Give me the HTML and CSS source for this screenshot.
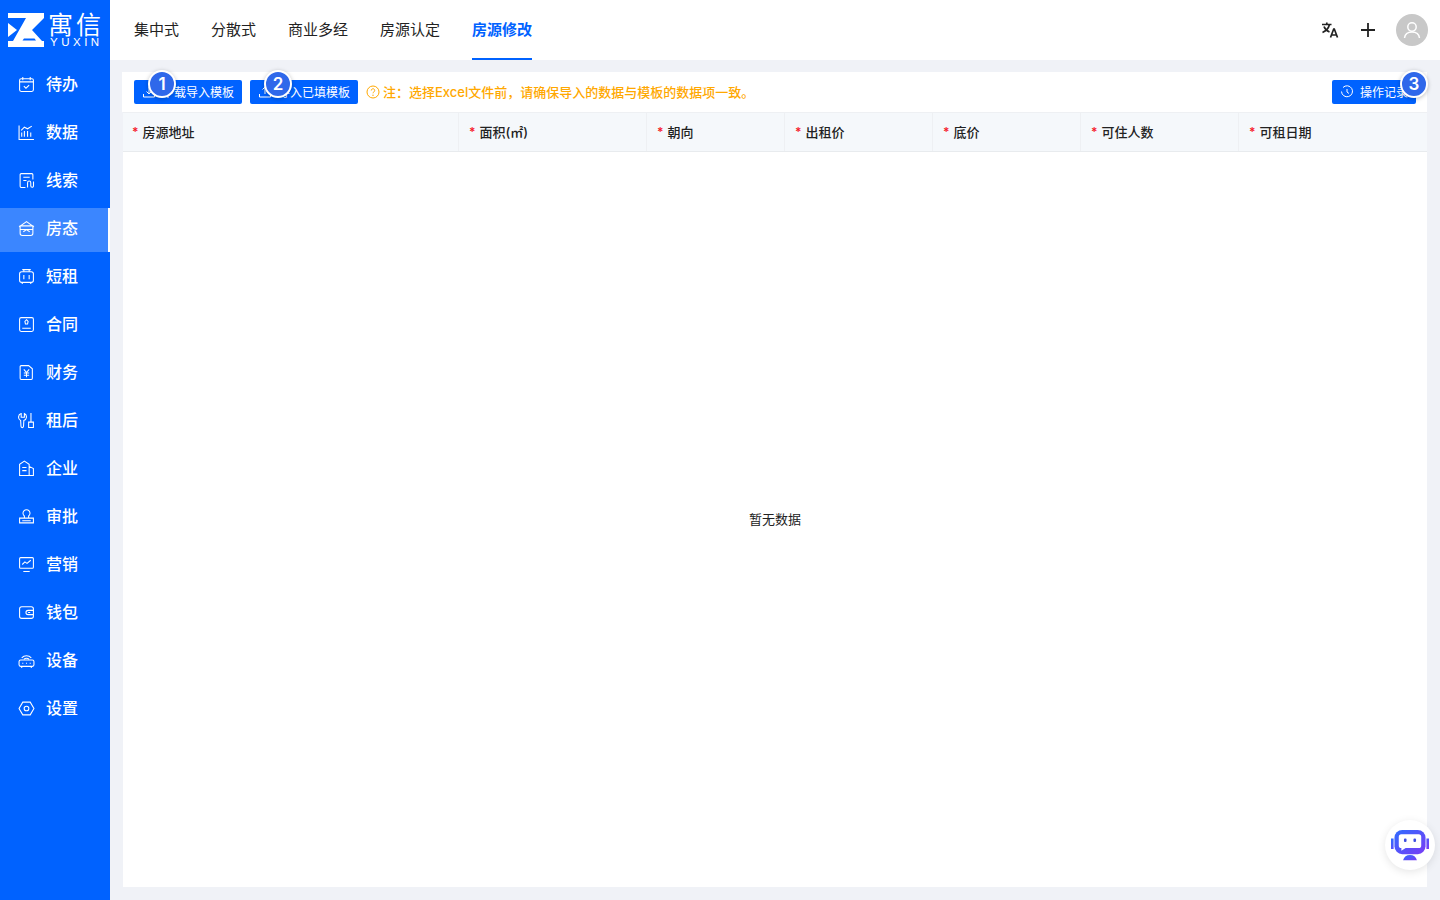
FILE: index.html
```html
<!DOCTYPE html>
<html lang="zh-CN">
<head>
<meta charset="utf-8">
<title>房源修改</title>
<link rel="stylesheet" href="styles.css">
</head>
<body>
<div class="app">
  <aside class="sidebar">
    <div class="logo">
      <svg class="logo-mark" width="36" height="34" viewBox="0 0 36 34"><rect width="36" height="34" fill="#fff"/><path fill="#0062ff" d="M0 5H18L5 28H0ZM36 5 24 17 34 28H36ZM16 25.500H26.500L28 27.500H14.500Z"/><path fill="#fff" d="M0 10 9 17 0 24Z"/></svg>
      <div class="logo-text"><span class="logo-cn">寓信</span><span class="logo-en">YUXIN</span></div>
    </div>
    <nav class="menu">
      <a class="item"><svg class="ico" viewBox="0 0 16 16"><rect x="1.500" y="2.500" width="13" height="12" rx="1.500"/><path d="M4.500 1v3M11.500 1v3M1.500 5.500h13M5.500 9.500l2 2 3-3"/></svg><span>待办</span></a>
      <a class="item"><svg class="ico" viewBox="0 0 16 16"><path d="M1 1.500v13h14M3.500 12V8M6 12V6.500M9 12V6.500M12 12V8M3 6l3-3 3 1.500L13 2"/></svg><span>数据</span></a>
      <a class="item"><svg class="ico" viewBox="0 0 16 16"><path d="M7 14.500H3a1 1 0 0 1-1-1v-11a1 1 0 0 1 1-1h10a1 1 0 0 1 1 1V7M5 5h6M5 8h3M9 14.500V10a1.500 1.500 0 0 1 3 0v3a1.300 1.300 0 0 0 2.600 0V9"/></svg><span>线索</span></a>
      <a class="item active"><svg class="ico" viewBox="0 0 16 16"><path d="M1 6.500 8 1.500l7 5M2 5.500h12v7a2 2 0 0 1-2 2H4a2 2 0 0 1-2-2zM2 9h12M5 11l3-2 3 2"/></svg><span>房态</span></a>
      <a class="item"><svg class="ico" viewBox="0 0 16 16"><rect x="1.500" y="3.500" width="13" height="10" rx="2"/><path d="M4 1.500h8M5.500 1.500v2M10.500 1.500v2M5.500 6.500v4M10.500 6.500v4M4 13.500v1.500M12 13.500v1.500"/></svg><span>短租</span></a>
      <a class="item"><svg class="ico" viewBox="0 0 16 16"><rect x="1.500" y="1.500" width="13" height="13" rx="1.500"/><path d="M4 11.500h8M8 3.500l1.500 1.500-.5 2.500H7L6.500 5z"/></svg><span>合同</span></a>
      <a class="item"><svg class="ico" viewBox="0 0 16 16"><path d="M3 1.500h7l3.500 3V13.500a1 1 0 0 1-1 1H3a1 1 0 0 1-1-1v-11a1 1 0 0 1 1-1zM5.500 5 8 8l2.500-3M8 8v4.500M5.500 8.500h5M5.500 10.500h5"/></svg><span>财务</span></a>
      <a class="item"><svg class="ico" viewBox="0 0 16 16"><path d="M3 1.500a3.500 3.500 0 0 0-.5 6.500l.3 5.500a1.200 1.200 0 0 0 2.400 0L5.500 8A3.500 3.500 0 0 0 6 1.500V5H3zM10 9.500h4.500v5H10zM12.200 9.500V1"/></svg><span>租后</span></a>
      <a class="item"><svg class="ico" viewBox="0 0 16 16"><path d="M1.500 14.500V4L6 1l4.500 3v10.500zM10.500 6l4 2v6.500h-4M4 7h4M4 10h4"/></svg><span>企业</span></a>
      <a class="item"><svg class="ico" viewBox="0 0 16 16"><path d="M6 9V7.500A3.300 3.300 0 1 1 10 7.500V9M1.500 9.500h13v4.500h-13zM4 12h8"/></svg><span>审批</span></a>
      <a class="item"><svg class="ico" viewBox="0 0 16 16"><rect x="1.500" y="1.500" width="13" height="10" rx="1"/><path d="M4 8l2.500-2.500 2 1.500L12 4M5 14.500h6"/></svg><span>营销</span></a>
      <a class="item"><svg class="ico" viewBox="0 0 16 16"><rect x="1.500" y="2.500" width="13" height="11" rx="2"/><path d="M14.500 6H9.500a2 2 0 0 0 0 4h5M9.500 8h2"/></svg><span>钱包</span></a>
      <a class="item"><svg class="ico" viewBox="0 0 16 16"><rect x="1" y="7.500" width="14" height="6" rx="1.500"/><path d="M3.500 13.500v1.500M12.500 13.500v1.500M4 10.500h1M7.500 10.500h1M11 10.500h1M3.500 5.500a6 6 0 0 1 9 0M5.500 7a3.500 3.500 0 0 1 5 0"/></svg><span>设备</span></a>
      <a class="item"><svg class="ico" viewBox="0 0 16 16"><path d="M4.500 2h7L15 8l-3.500 6h-7L1 8z"/><circle cx="8" cy="8" r="2.200"/></svg><span>设置</span></a>
    </nav>
  </aside>
  <div class="main">
    <header class="topbar">
      <nav class="tabs">
        <a class="tab">集中式</a>
        <a class="tab">分散式</a>
        <a class="tab">商业多经</a>
        <a class="tab">房源认定</a>
        <a class="tab current">房源修改</a>
      </nav>
      <div class="tools">
        <svg class="tool-lang" width="20" height="20" viewBox="0 0 20 20"><path d="M2 4.500h9.500M6.800 2.500v2M9.500 4.500C8.500 8.500 6 11 2.500 12.500M4 6.500c1 2.800 3 4.500 5.500 5.500M10.500 17.500l3.200-8.500h.6l3.200 8.500M11.600 15h5" fill="none" stroke="#222" stroke-width="1.700"/></svg>
        <svg class="tool-plus" width="16" height="16" viewBox="0 0 16 16"><path d="M8 1v14M1 8h14" fill="none" stroke="#222" stroke-width="1.800"/></svg>
        <div class="avatar"><svg width="20" height="20" viewBox="0 0 20 20"><circle cx="10" cy="7" r="4.200" fill="none" stroke="#fff" stroke-width="1.500"/><path d="M2.500 18c.5-4 3-6 7.500-6s7 2 7.500 6" fill="none" stroke="#fff" stroke-width="1.500"/></svg></div>
      </div>
    </header>
    <section class="content">
      <div class="card">
        <div class="toolbar">
          <a class="btn"><svg class="btn-ico" viewBox="0 0 14 14"><path d="M1.500 9v3h11V9M7 2v7M4.500 6.500 7 9l2.500-2.500"/></svg><span class="btn-text">下载导入模板</span><b class="badge b1">1</b></a>
          <a class="btn"><svg class="btn-ico" viewBox="0 0 14 14"><path d="M1.500 9v3h11V9M7 9V2M4.500 4.500 7 2l2.500 2.500"/></svg><span class="btn-text">导入已填模板</span><b class="badge b2">2</b></a>
          <p class="note"><svg width="14" height="14" viewBox="0 0 14 14"><circle cx="7" cy="7" r="6" fill="none" stroke="#ffa800" stroke-width="1"/><path d="M5.300 5.500a1.700 1.700 0 1 1 2.600 1.400c-.6.400-.9.700-.9 1.400" fill="none" stroke="#ffa800"/><circle cx="7" cy="10.200" r=".7" fill="#ffa800"/></svg><span class="note-text">注：选择Excel文件前，请确保导入的数据与模板的数据项一致。</span></p>
          <a class="btn btn-log"><svg class="btn-ico" viewBox="0 0 14 14"><path d="M3 2.500A5.500 5.500 0 1 1 1.500 6.500M7 4v3l2 1.500"/></svg><span class="btn-text">操作记录</span><b class="badge b3">3</b></a>
        </div>
        <div class="table">
          <div class="thead">
            <div class="th"><i>*</i>房源地址</div>
            <div class="th"><i>*</i>面积(㎡)</div>
            <div class="th"><i>*</i>朝向</div>
            <div class="th"><i>*</i>出租价</div>
            <div class="th"><i>*</i>底价</div>
            <div class="th"><i>*</i>可住人数</div>
            <div class="th"><i>*</i>可租日期</div>
          </div>
          <div class="empty">暂无数据</div>
        </div>
      </div>
    </section>
  </div>
</div>
<div class="robot">
  <svg viewBox="0 0 44 38">
    <defs><linearGradient id="rg" x1="0" y1="0" x2="1" y2="1"><stop offset="0" stop-color="#2f6bff"/><stop offset="1" stop-color="#7a3cf5"/></linearGradient></defs>
    <path fill="url(#rg)" d="M0 11h3v12H0zM41 11h3v12h-3z"/>
    <rect x="4" y="1" width="36" height="28" rx="9" fill="url(#rg)"/>
    <path fill="#fff" d="M12 6h20a3 3 0 0 1 3 3v10a3 3 0 0 1-3 3H17l-5 3v-3a3 3 0 0 1-3-3V9a3 3 0 0 1 3-3z"/>
    <rect x="15" y="11" width="3" height="4" rx="1.200" fill="#3f4fe0"/><rect x="26" y="11" width="3" height="4" rx="1.200" fill="#3f4fe0"/>
    <path fill="url(#rg)" d="M14 36c1-4 4-6 8-6s7 2 8 6z"/>
  </svg>
</div>
</body>
</html>
```
FILE: styles.css
```css
* { box-sizing: border-box; }
html, body { margin: 0; height: 100%; }
body { font-family: Inter, "Noto Sans CJK SC", sans-serif; color: #222; overflow: hidden; }
.app { display: flex; height: 900px; }

.sidebar { width: 110px; flex: none; background: #0062ff; color: #fff; }
.logo { height: 60px; display: flex; align-items: flex-start; padding: 13px 0 0 8px; gap: 4px; }
.logo-mark { flex: none; }
.logo-text { display: flex; flex-direction: column; width: 56px; }
.logo-cn { font-size: 25px; line-height: 24px; font-weight: 400; letter-spacing: 3px; white-space: nowrap; }
.logo-en { font-size: 11.500px; line-height: 10px; letter-spacing: 3.500px; margin-left: 2px; font-family: "Liberation Sans", sans-serif; }
.menu { display: flex; flex-direction: column; gap: 4px; padding-top: 4px; }
.item { height: 44px; display: flex; align-items: center; gap: 11px; padding: 0 0 6px 18px; font-size: 16px; font-weight: 500; }
.item.active { background: #3b86ff; box-shadow: inset -2px 0 0 #fff; }
.ico { width: 17px; height: 17px; margin-top: 2px; flex: none; fill: none; stroke: #fff; stroke-width: 1; }

.main { flex: 1; display: flex; flex-direction: column; min-width: 0; }
.topbar { height: 60px; flex: none; background: #fff; display: flex; justify-content: space-between; padding: 0 12px 0 24px; }
.tabs { display: flex; gap: 32px; }
.tab { height: 60px; line-height: 60px; font-size: 15px; color: #222; }
.tab.current { color: #0062ff; font-weight: 600; border-bottom: 2px solid #0062ff; }
.tools { display: flex; align-items: center; }
.tool-lang { margin-right: 20px; }
.tool-plus { margin-right: 20px; }
.avatar { width: 32px; height: 32px; border-radius: 50%; background: #c8c8c8; display: flex; align-items: center; justify-content: center; }

.content { flex: 1; background: #f0f2f7; padding: 12px 13px 13px 12px; min-height: 0; }
.card { height: 100%; display: flex; flex-direction: column; }
.toolbar { height: 40px; flex: none; background: #fff; display: flex; align-items: center; padding: 0 11px 0 12px; gap: 8px; }
.btn { position: relative; height: 24px; display: flex; align-items: center; padding: 0 8px; gap: 6px; background: #0062ff; color: #fff; font-size: 12px; border-radius: 2px; white-space: nowrap; }
.btn-text { position: relative; top: -1px; }
.btn-ico { width: 14px; height: 14px; fill: none; stroke: #fff; stroke-width: 1; flex: none; }
.btn-log { margin-left: auto; }
.badge { position: absolute; top: -10px; width: 28px; height: 28px; border-radius: 50%; background: #2f68ea; color: #fff; border: 2px solid #fff; font: 600 17px/24px Inter, sans-serif; text-align: center; box-shadow: 0 1px 4px rgba(0,0,0,.25); }
.b1, .b2 { left: 14px; }
.b3 { right: -12px; }
.note { margin: 0; display: flex; align-items: center; gap: 3px; color: #ffa800; font-size: 13px; font-weight: 500; }
.note-text { position: relative; top: -1px; }

.table { flex: 1; display: flex; flex-direction: column; margin-left: 1px; min-height: 0; background: #fff; }
.thead { height: 40px; flex: none; display: grid; grid-template-columns: 336px 188px 138px 148px 148px 158px 1fr; background: #f5f8fb; border-top: 1px solid #eef0f3; border-bottom: 1px solid #e8ebee; }
.th { display: flex; align-items: center; padding: 0 0 2px 10px; font-size: 13px; font-weight: 500; color: #222; border-right: 1px solid #eef0f3; }
.th:first-child { padding-left: 9px; }
.th:last-child { border-right: 0; }
.th i { color: #f5222d; font-style: normal; font-weight: 600; margin-right: 4px; font-size: 12px; }
.empty { flex: 1; display: flex; align-items: center; justify-content: center; font-size: 13px; color: #222; padding-bottom: 3px; }

.robot { position: absolute; left: 1385px; top: 820px; width: 50px; height: 50px; border-radius: 50%; background: #fff; box-shadow: 0 2px 8px rgba(0,0,0,.1); display: flex; align-items: center; justify-content: center; }
.robot svg { width: 38px; height: 33px; }
```
